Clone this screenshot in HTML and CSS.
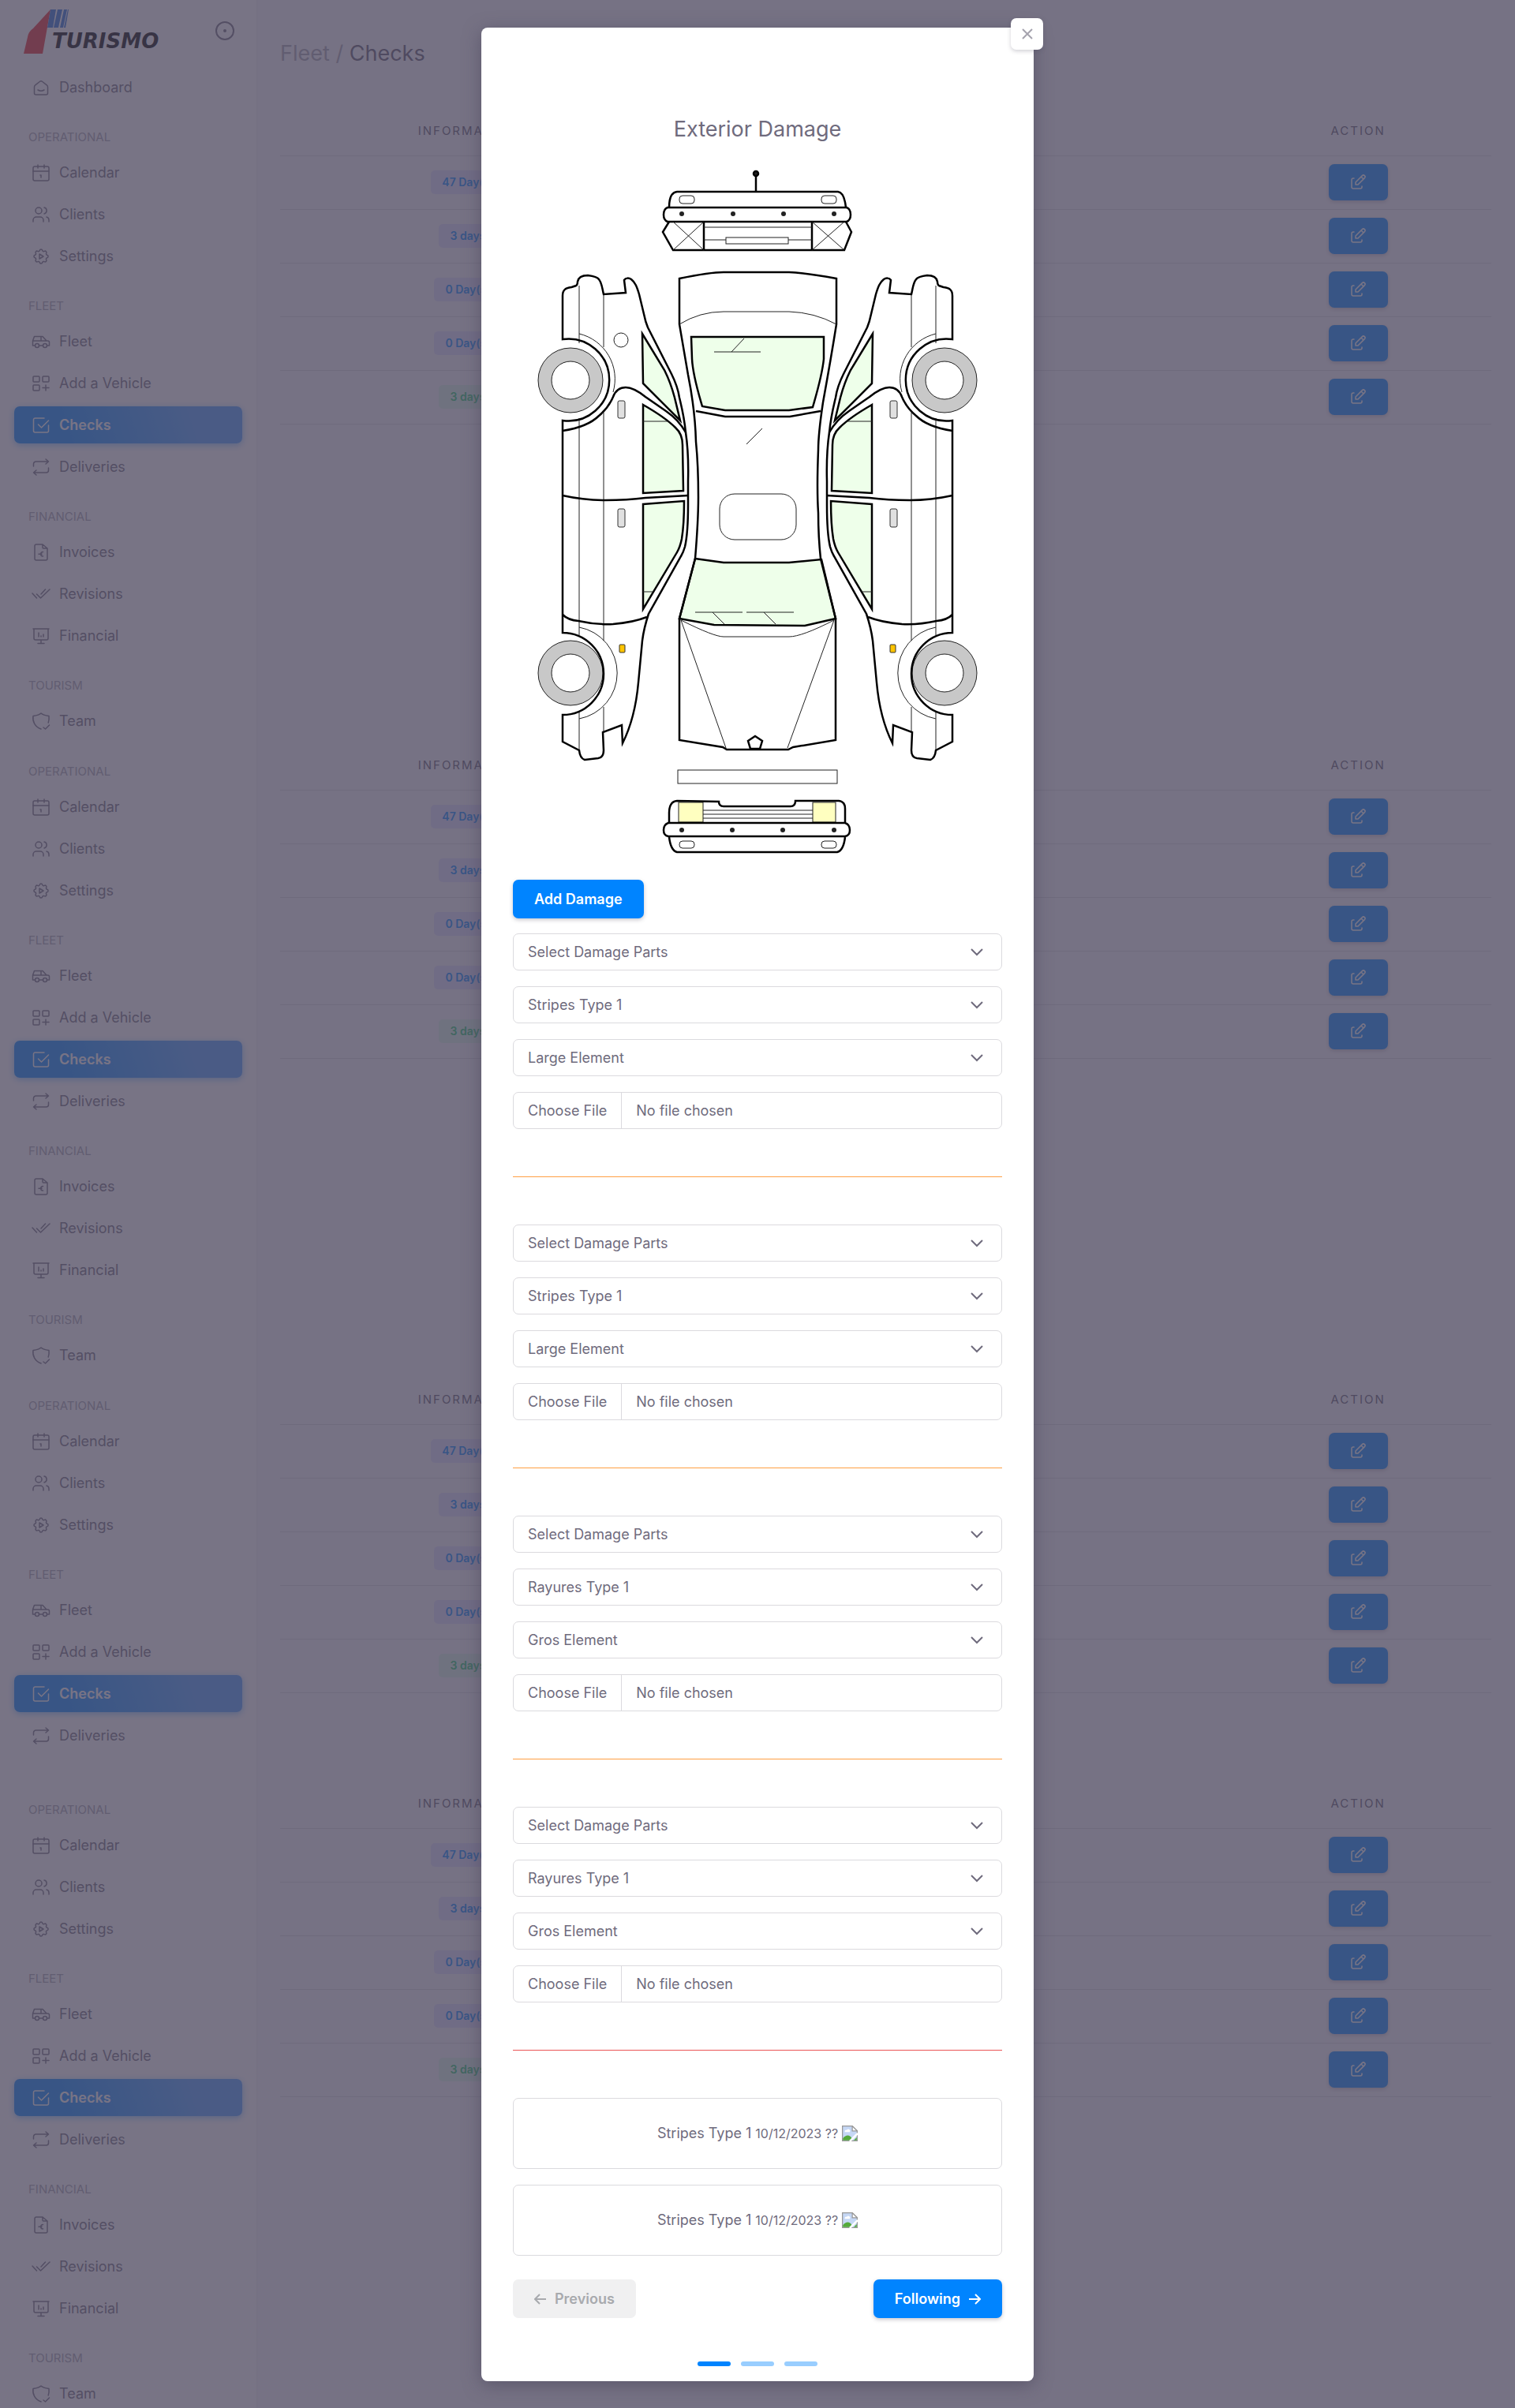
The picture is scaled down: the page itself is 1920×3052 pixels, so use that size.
FILE: index.html
```html
<!DOCTYPE html>
<html lang="en">
<head>
<meta charset="utf-8">
<title>Fleet / Checks</title>
<link rel="stylesheet" href="styles.css">
</head>
<body>
<svg class="defs" aria-hidden="true">
  <symbol id="i-home" viewBox="0 0 24 24"><path d="M19 8.700l-5.300-4.200a2.700 2.700 0 0 0-3.400 0L5 8.700a3 3 0 0 0-1.500 2.300V19a2 2 0 0 0 2 2h13a2 2 0 0 0 2-2v-8a3 3 0 0 0-1.500-2.300M16 15c-2.200 1.300-5.800 1.300-8 0"/></symbol>
  <symbol id="i-calendar" viewBox="0 0 24 24"><rect x="2" y="4" width="20" height="18" rx="2"/><path d="M16 2v4M8 2v4M2 10h20M11 15h1v3"/></symbol>
  <symbol id="i-users" viewBox="0 0 24 24"><circle cx="9" cy="7" r="4"/><path d="M2 21v-2a4 4 0 0 1 4-4h5a4 4 0 0 1 4 4v2M16 3.100a4 4 0 0 1 0 7.800M22 21v-2a4 4 0 0 0-3-3.900"/></symbol>
  <symbol id="i-settings" viewBox="0 0 24 24"><path d="M10.300 4.300c.4-1.800 2.900-1.800 3.400 0a1.700 1.700 0 0 0 2.600 1.100c1.500-.9 3.300.8 2.400 2.400a1.700 1.700 0 0 0 1 2.500c1.800.4 1.800 2.900 0 3.400a1.700 1.700 0 0 0-1 2.600c.9 1.500-.9 3.300-2.400 2.400a1.700 1.700 0 0 0-2.600 1c-.4 1.800-2.900 1.800-3.400 0a1.700 1.700 0 0 0-2.600-1c-1.500.9-3.300-.9-2.400-2.400a1.700 1.700 0 0 0-1-2.600c-1.800-.4-1.800-2.900 0-3.400a1.700 1.700 0 0 0 1-2.500c-.9-1.600.9-3.300 2.400-2.400a1.700 1.700 0 0 0 2.600-1.100zM10 9l5 3-5 3z"/></symbol>
  <symbol id="i-car" viewBox="0 0 24 24"><circle cx="7" cy="17" r="2.500"/><circle cx="17" cy="17" r="2.500"/><path d="M4.500 17H1.500v-6l2-5.500H14l5 5.500h1.500a2 2 0 0 1 2 2v4h-3M9.500 17h5M2 11h18M12 11V6"/></symbol>
  <symbol id="i-add" viewBox="0 0 24 24"><rect x="2" y="3" width="8" height="7" rx="1"/><rect x="14" y="3" width="8" height="7" rx="1"/><rect x="2" y="14" width="8" height="7" rx="1"/><path d="M14 17.500h8M18 14v7"/></symbol>
  <symbol id="i-check" viewBox="0 0 24 24"><path d="M8.500 11l4 4 9-9M21.500 12v7a2 2 0 0 1-2 2h-15a2 2 0 0 1-2-2V5a2 2 0 0 1 2-2H16"/></symbol>
  <symbol id="i-repeat" viewBox="0 0 24 24"><path d="M2.500 11V8a3 3 0 0 1 3-3h16M18 2l3.500 3L18 8M21.500 13v3a3 3 0 0 1-3 3h-16M6 22l-3.500-3L6 16"/></symbol>
  <symbol id="i-invoice" viewBox="0 0 24 24"><path d="M14 2v4a1 1 0 0 0 1 1h5M18 22H6a2 2 0 0 1-2-2V4a2 2 0 0 1 2-2h8l6 5v13a2 2 0 0 1-2 2zM14.500 11.500a2.800 2.800 0 1 0 0 5.600M9 14.300h4"/></symbol>
  <symbol id="i-checks" viewBox="0 0 24 24"><path d="M6.500 12l5 5L23 6M1 11l5.500 6M12 12l5.500-6"/></symbol>
  <symbol id="i-board" viewBox="0 0 24 24"><path d="M2 3h20M3 3v12a2 2 0 0 0 2 2h14a2 2 0 0 0 2-2V3M12 17v4M8 21.500h8M9 8v5M12 12v1M15 10v3"/></symbol>
  <symbol id="i-shield" viewBox="0 0 24 24"><path d="M12 22C4 19 1 12 2 5.500 6 5 9.500 4.500 12 2c2.500 2.500 6 3 10 3.500.3 3 .2 5.500-.8 8.500M15 20l2.500 2 5-5"/></symbol>
  <symbol id="i-edit" viewBox="0 0 24 24"><path d="M7 7H6a2 2 0 0 0-2 2v9a2 2 0 0 0 2 2h9a2 2 0 0 0 2-2v-1M20.400 6.600a2.100 2.100 0 0 0-3-3L9 12v3h3zM16 5l3 3"/></symbol>
  <symbol id="i-broken" viewBox="0 0 16 16"><path fill="#c5d7f5" stroke="#999" d="M.5.500h10l5 5v10H.5z"/><path fill="#fff" stroke="#999" d="M10.500.500v5h5z"/><path fill="#fff" d="M3 6.500a1.500 1.500 0 0 1 2-2 1.500 1.500 0 0 1 3 2z"/><path fill="#55aa3b" d="M1 15v-2c3-4 7-4 9 0l-1 2zM12 15l3-3v3z"/><path stroke="#fff" stroke-width="2" d="M8 16L16 8"/></symbol>
</svg>

<div class="page">
  <section class="band">
    <nav class="side">
      <div class="brand">
        <svg class="logo" viewBox="0 0 190 56" role="img" aria-label="Turismo">
          <path fill="#e8262a" d="M0 56L5 35Q6 28 12 24L34 0L24 56z"/>
          <path fill="#2a6fd6" d="M34 0h7l-4 23h-7zM43 0h6l-5 23h-6zM51 0h4l-5 23h-4zM56 0h1l-4 23h-2z"/>
          <text x="36" y="49">TURISMO</text>
        </svg>
        <svg class="pin" viewBox="0 0 24 24"><circle cx="12" cy="12" r="11"/><circle class="dot" cx="12" cy="12" r="1"/></svg>
      </div>
      <a class="item" href="#"><svg><use href="#i-home"/></svg>Dashboard</a>
      <h2>OPERATIONAL</h2>
      <a class="item" href="#"><svg><use href="#i-calendar"/></svg>Calendar</a>
      <a class="item" href="#"><svg><use href="#i-users"/></svg>Clients</a>
      <a class="item" href="#"><svg><use href="#i-settings"/></svg>Settings</a>
      <h2>FLEET</h2>
      <a class="item" href="#"><svg><use href="#i-car"/></svg>Fleet</a>
      <a class="item" href="#"><svg><use href="#i-add"/></svg>Add a Vehicle</a>
      <a class="item active" href="#"><svg><use href="#i-check"/></svg>Checks</a>
      <a class="item" href="#"><svg><use href="#i-repeat"/></svg>Deliveries</a>
      <h2>FINANCIAL</h2>
      <a class="item" href="#"><svg><use href="#i-invoice"/></svg>Invoices</a>
      <a class="item" href="#"><svg><use href="#i-checks"/></svg>Revisions</a>
      <a class="item" href="#"><svg><use href="#i-board"/></svg>Financial</a>
      <h2>TOURISM</h2>
      <a class="item" href="#"><svg><use href="#i-shield"/></svg>Team</a>
    </nav>
    <main class="main">
      <h1><span>Fleet /</span> Checks</h1>
      <table>
        <thead><tr><th>INFORMATION</th><th></th><th>ACTION</th></tr></thead>
        <tbody>
          <tr><td><span class="badge">47 Day(s)</span></td><td></td><td><button class="edit" aria-label="Edit"><svg><use href="#i-edit"/></svg></button></td></tr>
          <tr><td><span class="badge">3 days</span></td><td></td><td><button class="edit" aria-label="Edit"><svg><use href="#i-edit"/></svg></button></td></tr>
          <tr><td><span class="badge">0 Day(s)</span></td><td></td><td><button class="edit" aria-label="Edit"><svg><use href="#i-edit"/></svg></button></td></tr>
          <tr><td><span class="badge">0 Day(s)</span></td><td></td><td><button class="edit" aria-label="Edit"><svg><use href="#i-edit"/></svg></button></td></tr>
          <tr><td><span class="badge ok">3 days</span></td><td></td><td><button class="edit" aria-label="Edit"><svg><use href="#i-edit"/></svg></button></td></tr>
        </tbody>
      </table>
    </main>
  </section>

  <section class="band">
    <nav class="side">
      <h2>OPERATIONAL</h2>
      <a class="item" href="#"><svg><use href="#i-calendar"/></svg>Calendar</a>
      <a class="item" href="#"><svg><use href="#i-users"/></svg>Clients</a>
      <a class="item" href="#"><svg><use href="#i-settings"/></svg>Settings</a>
      <h2>FLEET</h2>
      <a class="item" href="#"><svg><use href="#i-car"/></svg>Fleet</a>
      <a class="item" href="#"><svg><use href="#i-add"/></svg>Add a Vehicle</a>
      <a class="item active" href="#"><svg><use href="#i-check"/></svg>Checks</a>
      <a class="item" href="#"><svg><use href="#i-repeat"/></svg>Deliveries</a>
      <h2>FINANCIAL</h2>
      <a class="item" href="#"><svg><use href="#i-invoice"/></svg>Invoices</a>
      <a class="item" href="#"><svg><use href="#i-checks"/></svg>Revisions</a>
      <a class="item" href="#"><svg><use href="#i-board"/></svg>Financial</a>
      <h2>TOURISM</h2>
      <a class="item" href="#"><svg><use href="#i-shield"/></svg>Team</a>
    </nav>
    <div class="main">
      <table>
        <thead><tr><th>INFORMATION</th><th></th><th>ACTION</th></tr></thead>
        <tbody>
          <tr><td><span class="badge">47 Day(s)</span></td><td></td><td><button class="edit" aria-label="Edit"><svg><use href="#i-edit"/></svg></button></td></tr>
          <tr><td><span class="badge">3 days</span></td><td></td><td><button class="edit" aria-label="Edit"><svg><use href="#i-edit"/></svg></button></td></tr>
          <tr><td><span class="badge">0 Day(s)</span></td><td></td><td><button class="edit" aria-label="Edit"><svg><use href="#i-edit"/></svg></button></td></tr>
          <tr><td><span class="badge">0 Day(s)</span></td><td></td><td><button class="edit" aria-label="Edit"><svg><use href="#i-edit"/></svg></button></td></tr>
          <tr><td><span class="badge ok">3 days</span></td><td></td><td><button class="edit" aria-label="Edit"><svg><use href="#i-edit"/></svg></button></td></tr>
        </tbody>
      </table>
    </div>
  </section>

  <section class="band">
    <nav class="side short">
      <h2>OPERATIONAL</h2>
      <a class="item" href="#"><svg><use href="#i-calendar"/></svg>Calendar</a>
      <a class="item" href="#"><svg><use href="#i-users"/></svg>Clients</a>
      <a class="item" href="#"><svg><use href="#i-settings"/></svg>Settings</a>
      <h2>FLEET</h2>
      <a class="item" href="#"><svg><use href="#i-car"/></svg>Fleet</a>
      <a class="item" href="#"><svg><use href="#i-add"/></svg>Add a Vehicle</a>
      <a class="item active" href="#"><svg><use href="#i-check"/></svg>Checks</a>
      <a class="item" href="#"><svg><use href="#i-repeat"/></svg>Deliveries</a>
    </nav>
    <div class="main">
      <table>
        <thead><tr><th>INFORMATION</th><th></th><th>ACTION</th></tr></thead>
        <tbody>
          <tr><td><span class="badge">47 Day(s)</span></td><td></td><td><button class="edit" aria-label="Edit"><svg><use href="#i-edit"/></svg></button></td></tr>
          <tr><td><span class="badge">3 days</span></td><td></td><td><button class="edit" aria-label="Edit"><svg><use href="#i-edit"/></svg></button></td></tr>
          <tr><td><span class="badge">0 Day(s)</span></td><td></td><td><button class="edit" aria-label="Edit"><svg><use href="#i-edit"/></svg></button></td></tr>
          <tr><td><span class="badge">0 Day(s)</span></td><td></td><td><button class="edit" aria-label="Edit"><svg><use href="#i-edit"/></svg></button></td></tr>
          <tr><td><span class="badge ok">3 days</span></td><td></td><td><button class="edit" aria-label="Edit"><svg><use href="#i-edit"/></svg></button></td></tr>
        </tbody>
      </table>
    </div>
  </section>

  <section class="band last">
    <nav class="side">
      <h2>OPERATIONAL</h2>
      <a class="item" href="#"><svg><use href="#i-calendar"/></svg>Calendar</a>
      <a class="item" href="#"><svg><use href="#i-users"/></svg>Clients</a>
      <a class="item" href="#"><svg><use href="#i-settings"/></svg>Settings</a>
      <h2>FLEET</h2>
      <a class="item" href="#"><svg><use href="#i-car"/></svg>Fleet</a>
      <a class="item" href="#"><svg><use href="#i-add"/></svg>Add a Vehicle</a>
      <a class="item active" href="#"><svg><use href="#i-check"/></svg>Checks</a>
      <a class="item" href="#"><svg><use href="#i-repeat"/></svg>Deliveries</a>
      <h2>FINANCIAL</h2>
      <a class="item" href="#"><svg><use href="#i-invoice"/></svg>Invoices</a>
      <a class="item" href="#"><svg><use href="#i-checks"/></svg>Revisions</a>
      <a class="item" href="#"><svg><use href="#i-board"/></svg>Financial</a>
      <h2>TOURISM</h2>
      <a class="item" href="#"><svg><use href="#i-shield"/></svg>Team</a>
    </nav>
    <div class="main">
      <table>
        <thead><tr><th>INFORMATION</th><th></th><th>ACTION</th></tr></thead>
        <tbody>
          <tr><td><span class="badge">47 Day(s)</span></td><td></td><td><button class="edit" aria-label="Edit"><svg><use href="#i-edit"/></svg></button></td></tr>
          <tr><td><span class="badge">3 days</span></td><td></td><td><button class="edit" aria-label="Edit"><svg><use href="#i-edit"/></svg></button></td></tr>
          <tr><td><span class="badge">0 Day(s)</span></td><td></td><td><button class="edit" aria-label="Edit"><svg><use href="#i-edit"/></svg></button></td></tr>
          <tr><td><span class="badge">0 Day(s)</span></td><td></td><td><button class="edit" aria-label="Edit"><svg><use href="#i-edit"/></svg></button></td></tr>
          <tr><td><span class="badge ok">3 days</span></td><td></td><td><button class="edit" aria-label="Edit"><svg><use href="#i-edit"/></svg></button></td></tr>
        </tbody>
      </table>
    </div>
  </section>
</div>

<div class="backdrop">
  <div class="modal" role="dialog" aria-labelledby="dlg-title">
    <button class="close" aria-label="Close"><svg viewBox="0 0 14 14"><path d="M1 1l12 12M13 1L1 13"/></svg></button>
    <h3 id="dlg-title">Exterior Damage</h3>

    <svg class="car" viewBox="0 0 600 890" role="img" aria-label="Unfolded view of the car">
      <defs>
        <g id="car-side">
          <g class="thin wheel">
            <circle cx="63" cy="272" r="41"/><circle class="hub" cx="63" cy="272" r="24"/>
            <circle cx="63" cy="643" r="41"/><circle class="hub" cx="63" cy="643" r="24"/>
          </g>
          <g class="thin">
            <path d="M74 152V225M74 320V595M74 692V741M105 163V230M105 313V602M105 686V718"/>
            <path d="M74 213A59 59 0 0 1 117 287M74 585A59 59 0 0 1 74 701"/>
          </g>
          <g class="glass">
            <path d="M154 213L182 259Q190 275 195 294L202 323L155 276z"/>
            <path d="M155 303Q183 319 196 332Q205 340 205 354L206 412L155 415z"/>
            <path d="M155 429L207 425Q207 455 204 473Q202 483 198 490L155 562z"/>
          </g>
          <path class="thin" d="M155 324H188M155 540H168"/>
          <path class="bold" d="M53 220V165C53 157 57 155 64 154C71 152 72 152 72 147C73 141 78 139 85 139C93 140 97 141 99 144C103 149 103 155 105 163L133 161L131 145C133 142 137 142 140 144C145 148 147 153 150 163L156 188Q158 198 161 205L191 264Q199 280 201 294Q207 318 209 338Q213 365 212 400V430C212 455 211 470 208 483Q206 490 203 495L162 568Q156 586 154 602L149 655Q145 700 129 732L128 709L104 718L105 741Q105 750 98 751L81 753Q75 751 74 741L53 730V696A52 52 0 1 0 53 592V323A52 52 0 1 0 53 220z"/>
          <path class="bold" d="M53 336Q85 331 99 317Q111 307 117 293C120 285 126 281 133 281Q143 281 158 293L184 311Q200 322 209 338M53 418Q80 424 107 424Q135 424 158 421L212 418M53 569Q60 576 73 577Q95 582 117 581Q142 579 160 572"/>
          <g class="handle"><rect x="123" y="298" width="9" height="22" rx="2"/><rect x="123" y="435" width="9" height="23" rx="2"/></g>
          <rect class="marker" x="125" y="607" width="7" height="10" rx="1"/>
        </g>
      </defs>

      <g class="bold">
        <path d="M298 33V12"/><circle class="dot" cx="298" cy="10" r="3"/>
        <path d="M188 53Q188 34 198 33H402Q410 34 412 53"/>
        <path d="M186 53H413Q418 55 418 62Q418 69 413 71H186Q181 69 181 62Q181 55 186 53z"/>
        <path d="M188 71L180 84L193 107H410L419 84L412 71M232 71V107M369 71V107"/>
      </g>
      <g class="thin">
        <rect x="201" y="38" width="19" height="10" rx="4"/><rect x="381" y="38" width="19" height="10" rx="4"/>
        <path d="M193 71L232 107M232 71L193 107M369 71L410 107M410 71L369 107M232 78H369M232 94H260M339 94H369"/>
        <rect x="260" y="91" width="79" height="8"/>
      </g>
      <g class="dot"><circle cx="204" cy="61" r="3"/><circle cx="269" cy="61" r="3"/><circle cx="333" cy="61" r="3"/><circle cx="397" cy="61" r="3"/></g>

      <use href="#car-side"/>
      <use href="#car-side" transform="translate(600 0) scale(-1 1)"/>
      <circle class="thin" cx="127" cy="221" r="9"/>

      <g class="glass">
        <path d="M216 217H384V245Q382 265 370 306L340 310H259L230 305Q218 265 217 245z"/>
        <path d="M221 498L257 503H340L381 499L399 574L360 583L245 582L201 574z"/>
      </g>
      <g class="bold">
        <path d="M201 143Q240 135 257 135H340Q362 136 400 143V201Q393 245 383 300Q377 340 377 360Q375 410 377 440Q377 470 380 498L399 574V728L345 737L339 740H261L256 737L201 728V574L221 498Q225 450 225 420Q225 380 222 350Q221 310 212 265L201 201z"/>
        <path d="M222 311L259 318H341L380 311"/>
        <path d="M297 723L306 729L303 739H291L288 729z"/>
      </g>
      <g class="thin">
        <path d="M201 201Q227 185 257 185H340Q372 186 400 201M245 236H304M283 219L267 236M306 333L286 353"/>
        <rect x="252" y="416" width="97" height="58" rx="19"/>
        <path d="M221 566H281M286 566H346M243 566L258 581M308 566L323 581M203 576Q245 597 257 597H340Q356 597 397 576M203 576L260 738M397 576L338 738"/>
        <rect x="199" y="766" width="202" height="17"/>
      </g>

      <g class="thin lamp"><rect x="200" y="807" width="31" height="25"/><rect x="370" y="807" width="29" height="25"/></g>
      <g class="thin">
        <path d="M231 817H370M231 822H370M231 827H370"/>
        <rect x="201" y="856" width="19" height="9" rx="4"/><rect x="381" y="856" width="19" height="9" rx="4"/>
      </g>
      <g class="bold">
        <path d="M188 832V820Q188 806 198 805L251 806Q251 812 257 812H342Q348 812 348 805H403Q411 806 411 815V832"/>
        <path d="M187 833H411Q417 835 417 842Q417 849 411 850H187Q181 849 181 842Q181 835 187 833z"/>
        <path d="M188 851Q190 868 198 870H401Q409 868 411 851"/>
      </g>
      <g class="dot"><circle cx="204" cy="842" r="3"/><circle cx="268" cy="842" r="3"/><circle cx="332" cy="842" r="3"/><circle cx="397" cy="842" r="3"/></g>
    </svg>

    <button class="btn add">Add Damage</button>

    <div class="fields">
      <select aria-label="Damage part"><option>Select Damage Parts</option></select>
      <select aria-label="Damage type"><option>Stripes Type 1</option></select>
      <select aria-label="Element size"><option>Large Element</option></select>
      <input type="file" aria-label="Photo">
    </div>
    <hr>
    <div class="fields">
      <select aria-label="Damage part"><option>Select Damage Parts</option></select>
      <select aria-label="Damage type"><option>Stripes Type 1</option></select>
      <select aria-label="Element size"><option>Large Element</option></select>
      <input type="file" aria-label="Photo">
    </div>
    <hr>
    <div class="fields">
      <select aria-label="Damage part"><option>Select Damage Parts</option></select>
      <select aria-label="Damage type"><option>Rayures Type 1</option></select>
      <select aria-label="Element size"><option>Gros Element</option></select>
      <input type="file" aria-label="Photo">
    </div>
    <hr>
    <div class="fields">
      <select aria-label="Damage part"><option>Select Damage Parts</option></select>
      <select aria-label="Damage type"><option>Rayures Type 1</option></select>
      <select aria-label="Element size"><option>Gros Element</option></select>
      <input type="file" aria-label="Photo">
    </div>
    <hr class="red">

    <div class="fields">
      <div class="card"><span>Stripes Type 1</span><small>10/12/2023 ??</small><svg><use href="#i-broken"/></svg></div>
      <div class="card"><span>Stripes Type 1</span><small>10/12/2023 ??</small><svg><use href="#i-broken"/></svg></div>
    </div>

    <div class="actions">
      <button class="btn prev" disabled><svg viewBox="0 0 16 16"><path d="M15 8H1M7 2L1 8l6 6"/></svg>Previous</button>
      <button class="btn">Following<svg viewBox="0 0 16 16"><path d="M1 8h14M9 2l6 6-6 6"/></svg></button>
    </div>
    <div class="steps"><i class="on"></i><i></i><i></i></div>
  </div>
</div>
</body>
</html>
```
FILE: styles.css
```css
* { box-sizing: border-box; }
body {
  margin: 0;
  position: relative;
  background: #f8f7fa;
  color: #6f6b7d;
  font-family: Inter, "Liberation Sans", sans-serif;
  font-size: 18px;
  line-height: 24px;
}
button, select, input { font: inherit; color: inherit; }
.defs { display: none; }

/* page behind the dialog */
.page { position: absolute; inset: 0; overflow: hidden; display: flex; flex-direction: column; }
.band { display: grid; grid-template-columns: 326px 1fr; }
.band.last { flex: 1; }
.side { background: #fff; border-right: 1px solid #f0eff3; padding: 0 18px 1px; }
.side.short { padding-bottom: 31px; }
.side > :last-child { margin-bottom: 0; }
.brand { display: flex; justify-content: space-between; align-items: flex-start; padding: 12px 10px 0 12px; height: 81px; }
.logo { width: 190px; height: 56px; }
.logo text { font: italic 700 26px "DejaVu Sans", sans-serif; fill: #000; }
.pin { width: 24px; height: 24px; margin-top: 15px; fill: none; stroke: #6f6b7d; stroke-width: 2; }
.pin .dot { fill: #6f6b7d; }
.side h2 { margin: 30px 0 11px; padding-left: 18px; font-size: 15px; font-weight: 400; line-height: 20px; color: #a5a3ae; }
.item {
  display: flex; align-items: center; gap: 11px;
  height: 47px; margin: 6px 0; padding-left: 22px;
  border-radius: 7px; color: #6f6b7d; text-decoration: none;
}
.item svg, .edit svg { width: 24px; height: 24px; fill: none; stroke: currentColor; stroke-width: 1.5; stroke-linecap: round; stroke-linejoin: round; }
.item.active { color: #fff; font-weight: 600; background: linear-gradient(72deg, #0084ff 22%, #479dff 77%); box-shadow: 0 2px 8px rgba(0, 132, 255, .5); }

.main { padding: 1px 30px 0 29px; }
h1 { margin: 49px 0; font-size: 27px; line-height: 36px; font-weight: 400; color: #5d596c; }
h1 span { color: #a5a3ae; }
table { width: 100%; table-layout: fixed; border-collapse: collapse; text-align: center; }
th { height: 62px; padding: 0; border-bottom: 1px solid #dbdade; font-size: 15px; font-weight: 400; letter-spacing: 2px; color: #5d596c; }
th:first-child { width: 31%; }
th:last-child { width: 22%; }
td { height: 68px; padding: 0; border-bottom: 1px solid #dbdade; vertical-align: middle; }
.badge { display: inline-block; padding: 3px 14px; border-radius: 5px; background: #e0deff; color: #0084ff; font-size: 14px; font-weight: 600; }
.badge.ok { background: #dcf6e8; color: #28c76f; }
.edit { display: inline-flex; align-items: center; justify-content: center; width: 75px; height: 46px; padding: 0; border: 0; border-radius: 7px; background: #0084ff; color: #fff; box-shadow: 0 2px 5px rgba(75, 70, 92, .3); vertical-align: middle; }

/* dialog */
.backdrop { position: relative; padding: 35px 20px 34px; background: rgba(75, 70, 92, .75); }
.modal {
  position: relative; max-width: 700px; margin: 0 auto; padding: 112px 40px 19px;
  display: flex; flex-direction: column; background: #fff; border-radius: 8px;
  box-shadow: 0 5px 22px rgba(75, 70, 92, .6);
}
.close { position: absolute; top: -12px; right: -12px; width: 41px; height: 40px; display: grid; place-items: center; padding: 0; border: 0; border-radius: 7px; background: #fff; box-shadow: 0 2px 5px rgba(75, 70, 92, .25); }
.close svg { width: 14px; height: 14px; fill: none; stroke: #a5a3ae; stroke-width: 2; }
h3 { margin: 0 0 29px; font-size: 27px; line-height: 34px; font-weight: 400; text-align: center; }
.car { width: 100%; max-width: 600px; margin: 0 auto 15px; }
.car .bold, .car .glass { fill: none; stroke: #000; stroke-width: 2.5; }
.car .glass { fill: #eeffea; }
.car .thin { fill: none; stroke: #222; stroke-width: 1; }
.car .wheel { fill: #c8c8c8; }
.car .hub { fill: #fff; }
.car .lamp { fill: #ffffc0; }
.car .dot { fill: #222; }
.car .handle { fill: #e0e0e0; stroke: #333; }
.car .marker { fill: #ffc400; stroke: #333; }

.btn {
  display: inline-flex; align-items: center; justify-content: center; gap: 10px;
  height: 49px; padding: 0 27px; border: 0; border-radius: 7px;
  background: #0084ff; color: #fff; font-weight: 600; box-shadow: 0 2px 5px rgba(75, 70, 92, .3);
}
.btn svg { width: 16px; height: 16px; fill: none; stroke: currentColor; stroke-width: 2; }
.btn.add { align-self: flex-start; margin-bottom: 19px; }
.btn.prev { background: #f0f0f1; color: #a8aaae; box-shadow: none; }
.fields { display: grid; gap: 20px; }
select, input[type=file] { width: 100%; height: 47px; border: 1px solid #dbdade; border-radius: 7px; background-color: #fff; }
select {
  appearance: none; padding: 0 18px;
  background-image: url("data:image/svg+xml,%3Csvg xmlns='http://www.w3.org/2000/svg' width='16' height='10' fill='none' stroke='%236f6b7d' stroke-width='2'%3E%3Cpath d='M1 1l7 7 7-7'/%3E%3C/svg%3E");
  background-repeat: no-repeat; background-position: right 23px center;
}
input[type=file] { line-height: 45px; overflow: hidden; }
input::file-selector-button { height: 45px; margin: 0 18px 0 0; padding: 0 18px; border: 0; border-right: 1px solid #dbdade; background: none; font: inherit; color: inherit; }
hr { width: 100%; margin: 60px 0; border: 0; border-top: 1px solid #ff9f43; }
hr.red { border-color: #ea5455; }
.card { display: flex; align-items: center; justify-content: center; gap: 5px; height: 90px; border: 1px solid #dbdade; border-radius: 7px; }
.card small { font-size: 16px; }
.card svg { width: 20px; height: 20px; fill: none; }
.actions { display: flex; justify-content: space-between; margin-top: 30px; }
.steps { display: flex; justify-content: center; gap: 13px; margin-top: 55px; }
.steps i { width: 42px; height: 6px; border-radius: 3px; background: #99ceff; }
.steps .on { background: #0084ff; }
```
